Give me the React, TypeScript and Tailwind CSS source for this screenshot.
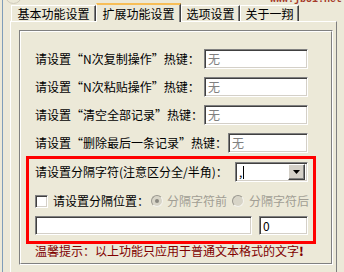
const sunken =
  'border border-t-[#808080] border-l-[#808080] border-b-white border-r-white shadow-[inset_1px_1px_0_#404040,inset_-1px_-1px_0_#d4d0c8]';

function Tab({ w, label }: { w: string; label: string }) {
  return (
    <div
      className={`${w} h-[16px] flex items-center justify-center border-t border-l border-r border-t-white border-l-white border-r-[#404040] shadow-[inset_-1px_0_0_#808080]`}
    >
      {label}
    </div>
  );
}

function HotkeyRow({ label, labelW, inputW, mt }: { label: string; labelW: string; inputW: string; mt: string }) {
  return (
    <div className={`flex items-center h-[20px] pl-[9px] ${mt}`}>
      <span className={`${labelW} whitespace-nowrap`}>{label}</span>
      <div className={`${inputW} h-[20px] bg-white ${sunken} flex items-center pl-[3px] text-[#808080]`}>无</div>
    </div>
  );
}

function Radio({ checked }: { checked?: boolean }) {
  return (
    <span className="w-[12px] h-[12px] rounded-full bg-[#d8d5c8] border border-t-[#9a9890] border-l-[#9a9890] border-b-[#f4f3ee] border-r-[#f4f3ee] flex items-center justify-center shrink-0">
      {checked && <span className="w-[4px] h-[4px] rounded-full bg-[#8a8880]" />}
    </span>
  );
}

export default function App() {
  return (
    <div className="relative w-[344px] h-[272px] overflow-hidden bg-[#ECE9D8] text-[12px] leading-[14px] text-black font-['Noto_Sans_CJK_SC',sans-serif]">
      {/* watermark */}
      <div className="absolute top-[-5px] left-[270px] text-[10px] leading-[10px] font-bold text-[#a53a2a] font-['Liberation_Mono',monospace]">
        www.jb51.net
      </div>
      <div className="absolute top-[-13px] left-[5px] w-[17px] h-[17px] rounded-full border border-[#cfcabb]" />

      <div className="ml-[2px] h-full border-l border-[#7F9DB9] pl-[7px] pt-[3px]">
        {/* tabs */}
        <div className="flex items-end h-[18px] pl-[1px]">
          <Tab w="w-[85px]" label="基本功能设置" />
          <div className="relative z-10 -mb-px w-[85px] h-[19px] flex items-center justify-center bg-[#ECE9D8] border-t-2 border-l border-r border-t-[#F7BE57] border-l-white border-r-[#404040] shadow-[inset_-1px_0_0_#808080]">
            扩展功能设置
          </div>
          <Tab w="w-[59px]" label="选项设置" />
          <Tab w="w-[59px]" label="关于一翔" />
        </div>

        {/* panel */}
        <div className="w-[327px] h-[260px] border-t border-l border-r border-t-white border-l-white border-r-[#808080] pl-[8px] pt-[8px]">
          {/* etched group */}
          <div className="w-[314px] h-[235px] border border-t-[#808080] border-l-[#808080] border-b-white border-r-white">
            <div className="h-full border border-t-white border-l-white border-b-[#808080] border-r-[#808080] pl-[5px]">
              <HotkeyRow mt="mt-[17px]" label="请设置“N次复制操作”热键：" labelW="w-[169px]" inputW="w-[104px]" />
              <HotkeyRow mt="mt-[8px]" label="请设置“N次粘贴操作”热键：" labelW="w-[169px]" inputW="w-[104px]" />
              <HotkeyRow mt="mt-[8px]" label="请设置“清空全部记录”热键：" labelW="w-[169px]" inputW="w-[104px]" />
              <HotkeyRow mt="mt-[8px]" label="请设置“删除最后一条记录”热键：" labelW="w-[193px]" inputW="w-[80px]" />

              {/* highlighted box */}
              <div className="mt-[3px] w-[290px] h-[88px] border-[3px] border-[#FF0000] pl-[6px] pt-[3px]">
                <div className="flex items-center h-[20px]">
                  <span className="w-[200px] whitespace-nowrap">请设置分隔字符(注意区分全/半角)：</span>
                  <div className={`w-[73px] h-[20px] bg-white ${sunken} flex items-center p-[2px]`}>
                    <div className="flex-1 flex items-center pl-[1px]">
                      <span>,</span>
                      <span className="ml-[1px] w-px h-[13px] bg-black" />
                    </div>
                    <div className="w-[17px] h-[16px] bg-[#D4D0C8] border border-t-white border-l-white border-b-[#404040] border-r-[#404040] shadow-[inset_-1px_-1px_0_#808080] flex items-center justify-center">
                      <svg width="7" height="4" viewBox="0 0 7 4">
                        <path d="M0 0h7L3.5 4z" fill="#000" />
                      </svg>
                    </div>
                  </div>
                </div>

                <div className="flex items-center h-[20px] mt-[9px]">
                  <span className={`w-[13px] h-[13px] bg-white ${sunken} shrink-0`} />
                  <span className="ml-[5px] w-[98px] whitespace-nowrap">请设置分隔位置：</span>
                  <Radio checked />
                  <span className="ml-[4px] w-[65px] whitespace-nowrap text-[#a19e94]">分隔字符前</span>
                  <Radio />
                  <span className="ml-[5px] whitespace-nowrap text-[#a19e94]">分隔字符后</span>
                </div>

                <div className="flex items-center h-[19px] mt-[5px] gap-[7px]">
                  <div className={`w-[217px] h-[19px] bg-white ${sunken}`} />
                  <div className={`w-[49px] h-[19px] bg-white ${sunken} flex items-center pl-[3px]`}>0</div>
                </div>
              </div>

              <div className="pl-[9px] text-[#800000] whitespace-nowrap">
                温馨提示：以上功能只应用于普通文本格式的文字<span className="font-black">!</span>
              </div>
            </div>
          </div>
        </div>
      </div>
    </div>
  );
}
